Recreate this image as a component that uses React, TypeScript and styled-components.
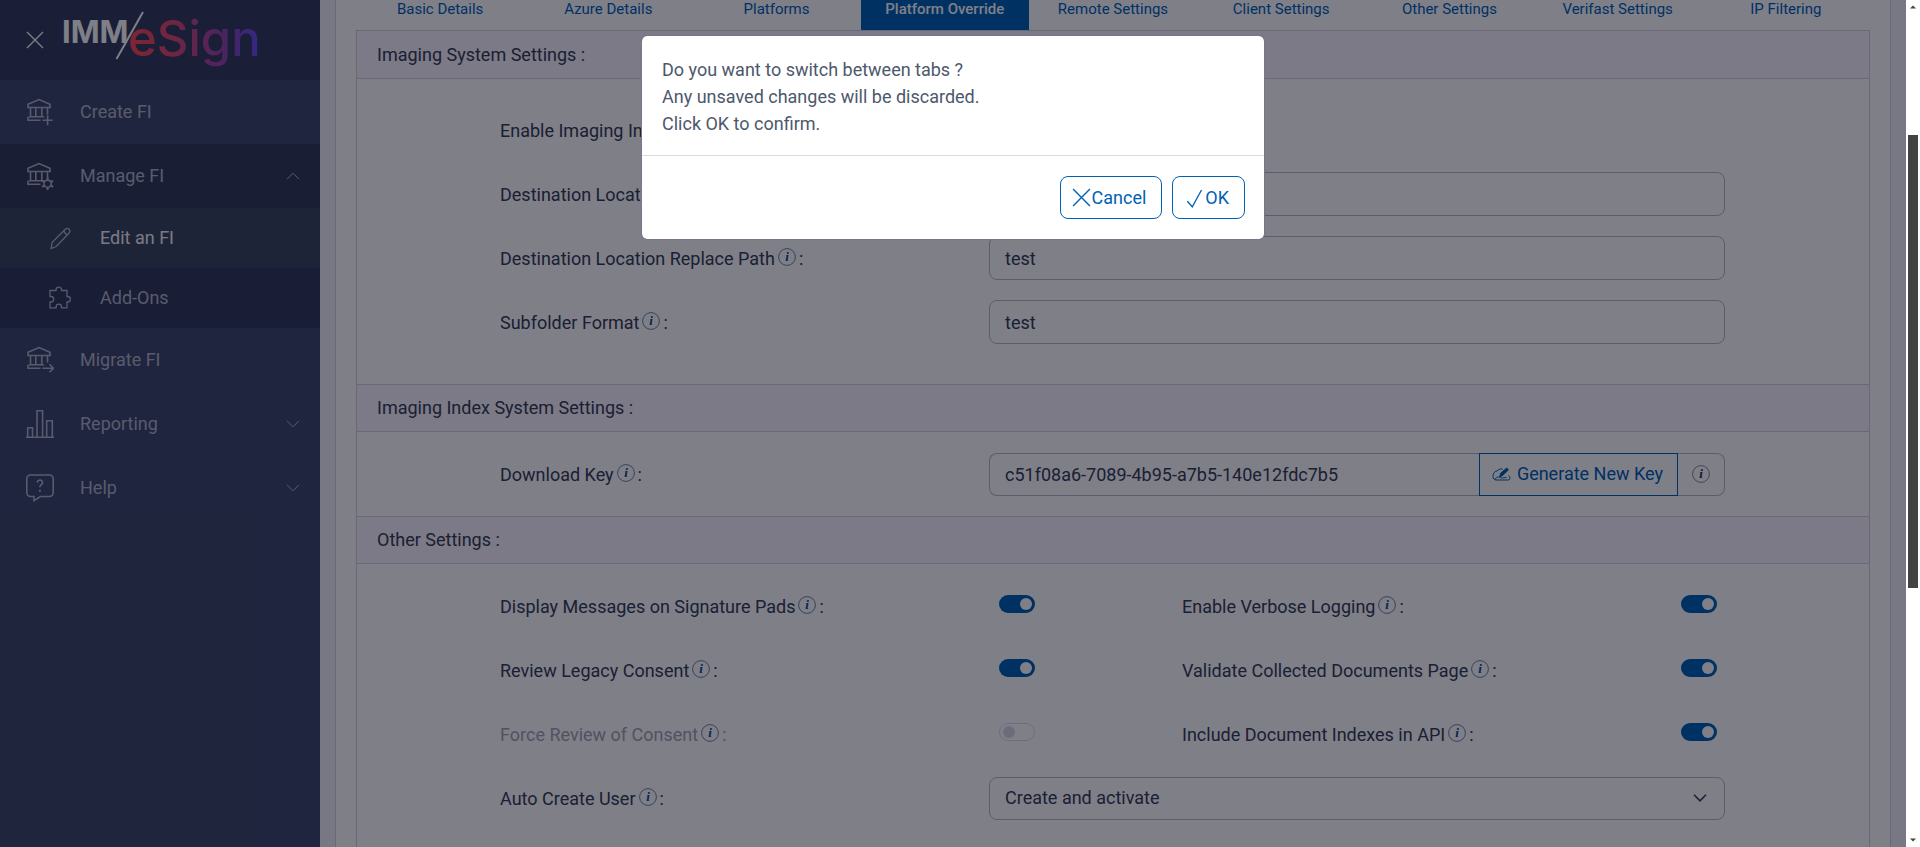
import React from "react";
import styled, { createGlobalStyle, css } from "styled-components";

const GlobalStyle = createGlobalStyle`
  * { box-sizing: border-box; }
  body {
    margin: 0;
    background: #ffffff;
    color: #364055;
    font-family: Roboto, "Liberation Sans", sans-serif;
    font-size: 18px;
    line-height: 26px;
  }
  button, input, select { font: inherit; color: inherit; }
`;

const blue = "#0062b5";
const line = "#d2d0db";
const fieldLine = "#b8b8cd";

const Shell = styled.div`
  display: flex;
  height: 100vh;
  overflow: hidden;
`;

const Viewport = styled.div`
  position: relative;
  display: flex;
  flex: 1;
  min-width: 0;
  overflow: hidden;
`;

/* ---------- side navigation ---------- */

const Sidebar = styled.aside`
  flex: 0 0 320px;
  background: #404a6c;
`;

const Brand = styled.header`
  display: flex;
  align-items: center;
  height: 80px;
  padding-left: 26px;
  background: #343e5d;
`;

const CloseButton = styled.button`
  display: flex;
  width: 18px;
  height: 18px;
  padding: 0;
  border: 0;
  background: none;
  color: #ffffff;
`;

const Logo = styled.svg`
  width: 200px;
  height: 80px;
  margin-left: 20px;
  overflow: visible;
`;

const NavLink = styled.a<{ $tone?: "open" | "current" | "sub" }>`
  display: flex;
  align-items: center;
  height: 64px;
  padding: 0 20px 0 26px;
  color: #b2b6c8;
  text-decoration: none;
  svg { flex: none; }
  span { flex: 1; margin-left: 26px; }
  ${(p) => p.$tone === "open" && css`background: #333c59;`}
  ${(p) =>
    (p.$tone === "current" || p.$tone === "sub") &&
    css`
      height: 60px;
      padding-left: 48px;
      background: #323b59;
      span { margin-left: 28px; }
    `}
  ${(p) =>
    p.$tone === "current" &&
    css`
      background: #3c485f;
      span { color: #f4f4f8; }
    `}
`;

/* ---------- page ---------- */

const Page = styled.main`
  flex: 1;
  min-width: 0;
  padding: 0 15px;
  background: #f1eef6;
`;

const Card = styled.div`
  min-height: 100%;
  padding: 0 20px;
  border: solid ${line};
  border-width: 0 1px;
  background: #ffffff;
`;

const Tabs = styled.nav`
  display: flex;
`;

const Tab = styled.a<{ $active?: boolean }>`
  flex: 1 1 0;
  padding-bottom: 12px;
  color: ${blue};
  font-size: 15px;
  line-height: 18px;
  text-align: center;
  text-decoration: none;
  ${(p) => p.$active && css`background: ${blue}; color: #ffffff; font-weight: 500;`}
`;

const Panel = styled.div`
  border: solid ${line};
  border-width: 1px 1px 0;
`;

const SectionTitle = styled.h2`
  margin: 0;
  padding: 10px 20px;
  border: solid ${line};
  border-width: 1px 0;
  background: #f7f5fb;
  font-size: 18px;
  font-weight: 400;
  line-height: 26px;
  &:first-child { border-top-color: #f7f5fb; }
`;

const SectionBody = styled.div<{ $roomy?: boolean }>`
  display: grid;
  gap: 20px;
  padding: ${(p) => (p.$roomy ? "29px 144px 40px 143px" : "20px 144px 20px 143px")};
  &:last-child { padding-bottom: 40px; }
`;

const Row = styled.div`
  display: grid;
  grid-template-columns: 489fr 736fr;
  align-items: center;
  min-height: 44px;
`;

const TogglePair = styled.div`
  display: grid;
  grid-template-columns: 682fr 543fr;
  align-items: center;
  min-height: 44px;
`;

const ToggleCell = styled.div`
  display: grid;
  grid-template-columns: 499px auto;
  align-items: center;
  justify-content: start;
`;

const FieldLabel = styled.label<{ $muted?: boolean }>`
  display: flex;
  align-items: center;
  gap: 3px;
  padding-top: 1px;
  color: ${(p) => (p.$muted ? "#a3a4b0" : "inherit")};
  white-space: nowrap;
  svg { flex: none; margin-bottom: 4px; }
`;

const TextBox = styled.input`
  width: 100%;
  min-width: 0;
  height: 44px;
  padding: 0 15px;
  border: 1px solid ${fieldLine};
  border-radius: 8px;
  background: transparent;
  outline: none;
`;

const KeyGroup = styled.div`
  display: flex;
  height: 43px;
  ${TextBox} {
    flex: 1;
    height: 43px;
    border-right: 0;
    border-radius: 8px 0 0 8px;
  }
`;

const GenerateButton = styled.button`
  display: flex;
  align-items: center;
  gap: 6px;
  padding: 0 14px 0 12px;
  border: 1px solid ${blue};
  background: transparent;
  color: ${blue};
  white-space: nowrap;
`;

const KeyHint = styled.span`
  display: flex;
  align-items: center;
  justify-content: center;
  width: 47px;
  border: 1px solid ${fieldLine};
  border-left: 0;
  border-radius: 0 8px 8px 0;
`;

const SelectWrap = styled.div`
  display: grid;
  align-items: center;
  select, svg { grid-area: 1 / 1; }
  svg { justify-self: end; margin-right: 18px; pointer-events: none; }
`;

const Select = styled.select`
  width: 100%;
  height: 43px;
  padding: 0 15px;
  border: 1px solid ${fieldLine};
  border-radius: 8px;
  background: transparent;
  appearance: none;
`;

const Switch = styled.input`
  display: flex;
  align-items: center;
  justify-content: flex-end;
  width: 36px;
  height: 18px;
  margin: 0 0 5px;
  padding: 0 3px;
  border-radius: 9px;
  background: ${blue};
  appearance: none;
  &::before {
    content: "";
    width: 12px;
    height: 12px;
    border-radius: 50%;
    background: #ffffff;
  }
  &:not(:checked) {
    justify-content: flex-start;
    border: 1px solid #dcdbe4;
    background: transparent;
  }
  &:not(:checked)::before { background: #d8d7e2; }
`;

/* ---------- confirmation dialog ---------- */

const Backdrop = styled.div`
  position: absolute;
  inset: 0;
  padding: 35px 16px;
  background: rgba(0, 0, 17, 0.5);
`;

const Dialog = styled.section`
  max-width: 624px;
  margin: 0 auto;
  border: 1px solid #77778a;
  border-radius: 6px;
  background: #ffffff;
  background-clip: padding-box;
`;

const DialogText = styled.p`
  margin: 0;
  padding: 20px 20px 18px;
  color: #4d586c;
  line-height: 27px;
`;

const DialogActions = styled.footer`
  display: flex;
  justify-content: flex-end;
  gap: 10px;
  padding: 20px 19px;
  border-top: 1px solid #dadbdd;
`;

const ActionButton = styled.button`
  display: flex;
  align-items: center;
  gap: 1px;
  height: 43px;
  padding: 0 15px 0 11px;
  border: 1px solid ${blue};
  border-radius: 8px;
  background: #ffffff;
  color: ${blue};
`;

/* ---------- page scroll track ---------- */

const ScrollTrack = styled.div`
  display: flex;
  flex: 0 0 14px;
  flex-direction: column;
  align-items: center;
  padding: 4px 0;
  background: #ffffff;
`;

const ScrollSpace = styled.div<{ $share: number }>`
  flex: ${(p) => p.$share} 0 0;
`;

const ScrollThumb = styled.div`
  flex: 453 0 0;
  width: 10px;
  background: #434343;
`;

/* ---------- icons ---------- */

const stroke = {
  fill: "none",
  stroke: "currentColor",
  strokeWidth: 1.6,
} as const;

const BankIcon = ({ children }: { children: React.ReactNode }) => (
  <svg width="28" height="28" viewBox="0 0 28 28" {...stroke}>
    <path d="M2 9.5V6.2L13 1.5l11 4.7v3.3zM4.5 9.5v9M9.8 9.5v9M15.800 9.500v9M21.500 9.500v7M3 18.700h15M2 18.700v3.600h12.500" />
    {children}
  </svg>
);

const BankAddIcon = () => (
  <BankIcon>
    <path d="M21.6 17.2v10M16.6 22.2h10" />
  </BankIcon>
);

const BankGearIcon = () => (
  <BankIcon>
    <circle cx="21.6" cy="21.7" r="3.6" />
    <path
      strokeWidth="2"
      d="M21.6 15.4v2.4M21.6 25.6v2.4M16.1 18.6l2.1 1.2M25 23.6l2.1 1.2M16.1 24.8l2.1-1.2M25 19.8l2.1-1.2"
    />
  </BankIcon>
);

const BankMoveIcon = () => (
  <BankIcon>
    <path d="M16.5 22.300h11M23.500 18.300l4 4-4 4" />
  </BankIcon>
);

const PencilIcon = () => (
  <svg width="24" height="24" viewBox="0 0 24 24" {...stroke} strokeWidth={1.3}>
    <path d="M3 22.500l1.200-6.200L17.300 3.200a2.600 2.600 0 0 1 3.800 0 2.600 2.600 0 0 1 0 3.800L8.200 20.500zM15.800 4.600c.4 2.200 1.800 3.600 4 4" />
  </svg>
);

const PuzzleIcon = () => (
  <svg width="24" height="24" viewBox="0 0 24 24" {...stroke} strokeWidth={1.300}>
    <path d="M2 4.500h6V4a2.800 2.800 0 0 1 5.600 0v.5H19v6h.7a2.700 2.700 0 0 1 0 5.400H19v6h-5.500v-1a2.700 2.700 0 0 0-5.400 0v1H2v-6h1a2.700 2.700 0 0 0 0-5.400H2z" />
  </svg>
);

const ChartIcon = () => (
  <svg width="28" height="28" viewBox="0 0 28 28" {...stroke}>
    <path d="M0 27.200h28M1.700 27V17.700h4.800V27M11 27V.8h5.600V27M20.700 27V10.700h5.600V27" />
  </svg>
);

const HelpIcon = () => (
  <svg width="28" height="28" viewBox="0 0 28 28" {...stroke}>
    <path d="M4.500 1h19a3.700 3.700 0 0 1 3.700 3.700v14.100a3.700 3.700 0 0 1-3.700 3.700h-9L8 26.600v-4.100H4.500a3.700 3.700 0 0 1-3.700-3.700V4.700A3.700 3.700 0 0 1 4.500 1z" />
    <path d="M11.300 8.600c.2-3.600 5.600-3.200 5.200.2-.2 1.900-2.600 2-2.600 4.500" />
    <path strokeWidth="2" d="M13.900 15.800v2" />
  </svg>
);

const Chevron = ({ up }: { up?: boolean }) => (
  <svg width="14" height="8" viewBox="0 0 14 8" {...stroke} strokeWidth={1}>
    <path d={up ? "M1 7.200l6-6 6 6" : "M1 .8l6 6 6-6"} />
  </svg>
);

const CrossIcon = ({ size }: { size: number }) => (
  <svg width={size} height={size} viewBox="0 0 18 18" {...stroke} strokeWidth={1.3}>
    <path d="M1 1l16 16M17 1L1 17" />
  </svg>
);

const CheckIcon = () => (
  <svg width="20" height="20" viewBox="0 0 20 20" {...stroke} strokeWidth={1.300}>
    <path d="M3.300 13.200l5 5.600L17.500 2" />
  </svg>
);

const KeyPenIcon = () => (
  <svg width="19" height="14" viewBox="0 0 19 14" {...stroke} strokeWidth={1}>
    <path d="M10.500 2.200C8.500 1.600 6.500 2 5 4 2.500 4 1 6.500 1 9.500c0 2 1.500 3.500 3 3.500h12c2.600 0 2.600-3.600.4-4.500M3 12c2-2.500 5-2.500 6.500-1 1.500 0 2-.5 5-.5" />
    <path fill="currentColor" d="M7.500 10l1.400-4L14.800 1l1.600 1.900-5.800 5.600z" />
  </svg>
);

const InfoIcon = ({ dark }: { dark?: boolean }) => (
  <svg width="18" height="18" viewBox="0 0 18 18">
    <circle cx="9" cy="9" r="8.400" fill="none" stroke={dark ? "#8a8a9c" : "#71839f"} strokeWidth="1" />
    <text
      x="9"
      y="13"
      textAnchor="middle"
      fill={dark ? "#2f3344" : "#104a86"}
      fontFamily="Liberation Serif, serif"
      fontSize="13"
      fontStyle="italic"
      fontWeight="700"
    >
      i
    </text>
  </svg>
);

const BrandLogo = () => (
  <Logo viewBox="0 0 200 80" role="img" aria-label="IMM eSign">
    <defs>
      <linearGradient id="brand" gradientUnits="userSpaceOnUse" x1="66" y1="0" x2="192" y2="0">
        <stop offset="0" stopColor="#ff4a52" />
        <stop offset="0.35" stopColor="#dc4c74" />
        <stop offset="0.75" stopColor="#9648ac" />
        <stop offset="1" stopColor="#6a50f0" />
      </linearGradient>
    </defs>
    <text x="-2" y="43" fill="#ffffff" fontFamily="Inter, sans-serif" fontSize="31" fontWeight="700">
      IMM
    </text>
    <path d="M79 12L52.500 59" stroke="#ffffff" strokeWidth="2" />
    <text
      x="64"
      y="56"
      fill="url(#brand)"
      fontFamily="Inter, sans-serif"
      fontSize="49"
      fontWeight="500"
    >
      eSign
    </text>
  </Logo>
);

/* ---------- composed parts ---------- */

const Caption = ({ id, text, muted }: { id: string; text: string; muted?: boolean }) => (
  <FieldLabel htmlFor={id} $muted={muted}>
    {text}
    <InfoIcon />
    <span>:</span>
  </FieldLabel>
);

const TextField = ({ id, label }: { id: string; label: string }) => (
  <Row>
    <Caption id={id} text={label} />
    <TextBox id={id} defaultValue="test" />
  </Row>
);

const Toggle = ({ id, label, off }: { id: string; label: string; off?: boolean }) => (
  <ToggleCell>
    <Caption id={id} text={label} muted={off} />
    <Switch id={id} type="checkbox" role="switch" defaultChecked={!off} disabled={off} />
  </ToggleCell>
);

const tabs = [
  "Basic Details",
  "Azure Details",
  "Platforms",
  "Platform Override",
  "Remote Settings",
  "Client Settings",
  "Other Settings",
  "Verifast Settings",
  "IP Filtering",
];

export default function App() {
  return (
    <Shell>
      <GlobalStyle />
      <Viewport>
        <Sidebar>
          <Brand>
            <CloseButton aria-label="Close menu">
              <CrossIcon size={18} />
            </CloseButton>
            <BrandLogo />
          </Brand>
          <nav>
            <NavLink href="#create"><BankAddIcon /><span>Create FI</span></NavLink>
            <NavLink href="#manage" $tone="open"><BankGearIcon /><span>Manage FI</span><Chevron up /></NavLink>
            <NavLink href="#edit" $tone="current"><PencilIcon /><span>Edit an FI</span></NavLink>
            <NavLink href="#addons" $tone="sub"><PuzzleIcon /><span>Add-Ons</span></NavLink>
            <NavLink href="#migrate"><BankMoveIcon /><span>Migrate FI</span></NavLink>
            <NavLink href="#reporting"><ChartIcon /><span>Reporting</span><Chevron /></NavLink>
            <NavLink href="#help"><HelpIcon /><span>Help</span><Chevron /></NavLink>
          </nav>
        </Sidebar>

        <Page>
          <Card>
            <Tabs>
              {tabs.map((name) => (
                <Tab key={name} href="#tab" $active={name === "Platform Override"}>
                  {name}
                </Tab>
              ))}
            </Tabs>
            <Panel>
              <SectionTitle>Imaging System Settings :</SectionTitle>
              <SectionBody $roomy>
                <Row>
                  <Caption id="imaging" text="Enable Imaging Index" />
                  <div>
                    <Switch id="imaging" type="checkbox" role="switch" defaultChecked />
                  </div>
                </Row>
                <TextField id="location" label="Destination Location" />
                <TextField id="replace" label="Destination Location Replace Path" />
                <TextField id="subfolder" label="Subfolder Format" />
              </SectionBody>

              <SectionTitle>Imaging Index System Settings :</SectionTitle>
              <SectionBody>
                <Row>
                  <Caption id="key" text="Download Key" />
                  <KeyGroup>
                    <TextBox id="key" readOnly value="c51f08a6-7089-4b95-a7b5-140e12fdc7b5" />
                    <GenerateButton>
                      <KeyPenIcon />
                      Generate New Key
                    </GenerateButton>
                    <KeyHint>
                      <InfoIcon dark />
                    </KeyHint>
                  </KeyGroup>
                </Row>
              </SectionBody>

              <SectionTitle>Other Settings :</SectionTitle>
              <SectionBody>
                <TogglePair>
                  <Toggle id="pads" label="Display Messages on Signature Pads" />
                  <Toggle id="verbose" label="Enable Verbose Logging" />
                </TogglePair>
                <TogglePair>
                  <Toggle id="legacy" label="Review Legacy Consent" />
                  <Toggle id="validate" label="Validate Collected Documents Page" />
                </TogglePair>
                <TogglePair>
                  <Toggle id="force" label="Force Review of Consent" off />
                  <Toggle id="indexes" label="Include Document Indexes in API" />
                </TogglePair>
                <Row>
                  <Caption id="autocreate" text="Auto Create User" />
                  <SelectWrap>
                    <Select id="autocreate">
                      <option>Create and activate</option>
                    </Select>
                    <svg width="14" height="8" viewBox="0 0 14 8" {...stroke}>
                      <path d="M1 .8l6 6 6-6" />
                    </svg>
                  </SelectWrap>
                </Row>
              </SectionBody>
            </Panel>
          </Card>
        </Page>

        <Backdrop>
          <Dialog role="dialog" aria-modal="true">
            <DialogText>
              Do you want to switch between tabs ?<br />
              Any unsaved changes will be discarded.<br />
              Click OK to confirm.
            </DialogText>
            <DialogActions>
              <ActionButton><CrossIcon size={19} />Cancel</ActionButton>
              <ActionButton><CheckIcon />OK</ActionButton>
            </DialogActions>
          </Dialog>
        </Backdrop>
      </Viewport>

      <ScrollTrack aria-hidden="true">
        <svg width="6" height="6" viewBox="0 0 6 6"><path d="M0 4.500L3 1.500l3 3z" fill="#434343" /></svg>
        <ScrollSpace $share={125} />
        <ScrollThumb />
        <ScrollSpace $share={249} />
        <svg width="6" height="6" viewBox="0 0 6 6"><path d="M0 1.500l3 3 3-3z" fill="#434343" /></svg>
      </ScrollTrack>
    </Shell>
  );
}
